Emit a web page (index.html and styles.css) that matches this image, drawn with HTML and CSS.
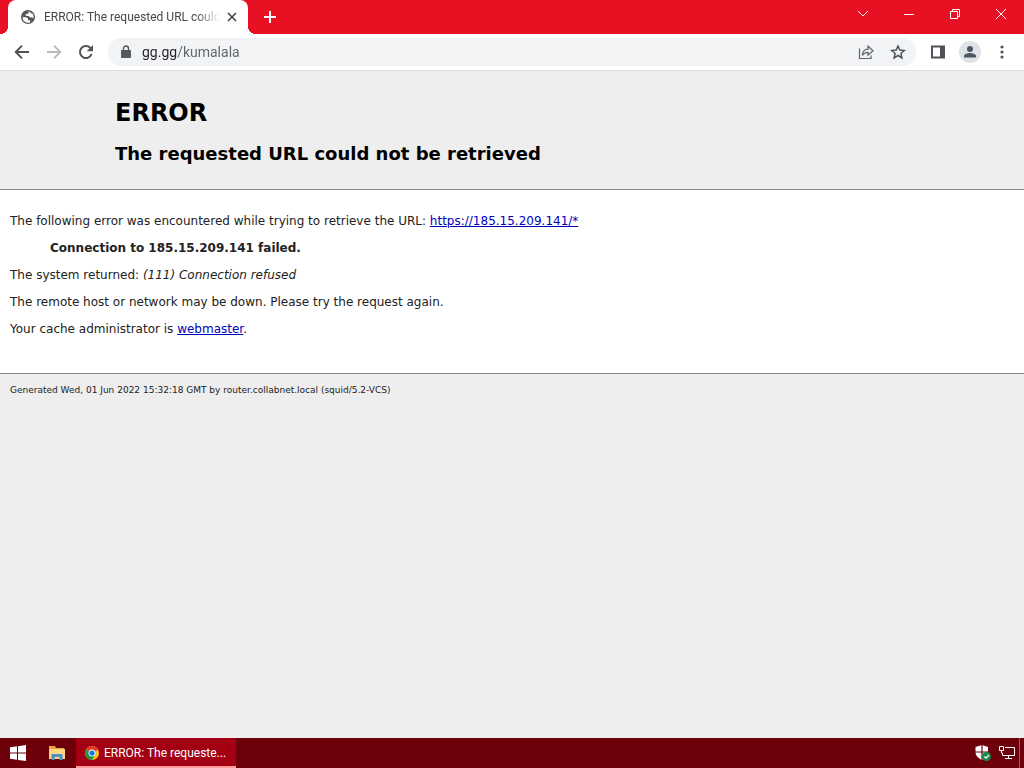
FILE: index.html
```html
<!DOCTYPE html>
<html lang="en">
<head>
  <meta charset="UTF-8" />
  <meta name="viewport" content="width=device-width, initial-scale=1.0" />
  <title>ERROR: The requested URL could not be retrieved</title>
  <link rel="stylesheet" href="styles.css">
</head>
<body>
  <!-- Tab strip -->
  <header class="titlebar">
    <div class="tab">
      <svg class="tab-icon" viewBox="0 0 16 16" width="16" height="16">
        <circle cx="8" cy="8" r="7" fill="#55585c" />
        <path d="M2.400 8.200H6l2 1.300v1.800h2.300l-.3 2.200A5.800 5.800 0 0 1 2.400 8.200ZM7.800 2.300 9 3.600 7.300 5 5.500 5.200 5.700 6.700 8.600 6.900 10.200 8.500 12 8.200 13.700 9.200A5.800 5.800 0 0 0 12 3.900L10.800 4.700 10.300 2.900Z" fill="#fff" />
      </svg>
      <span class="tab-title">ERROR: The requested URL could</span>
      <button class="tab-close" aria-label="Close tab">
        <svg viewBox="0 0 16 16" width="16" height="16"><path d="M4 4l8 8M12 4l-8 8" stroke="#45484c" stroke-width="1.700" /></svg>
      </button>
    </div>
    <button class="new-tab" aria-label="New tab">
      <svg viewBox="0 0 16 16" width="16" height="16"><path d="M8 2v12M2 8h12" stroke="#fff" stroke-width="2" /></svg>
    </button>
    <div class="window-buttons">
      <button aria-label="Search tabs">
        <svg viewBox="0 0 12 12" width="12" height="12"><path d="M1 3l5 5 5-5" /></svg>
      </button>
      <button aria-label="Minimize">
        <svg viewBox="0 0 12 12" width="12" height="12"><path d="M1 6.500h10" /></svg>
      </button>
      <button aria-label="Restore">
        <svg viewBox="0 0 12 12" width="12" height="12"><path d="M1.500 3.500h7v7h-7zM3.500 3.500v-2h7v7h-2" /></svg>
      </button>
      <button aria-label="Close">
        <svg viewBox="0 0 12 12" width="12" height="12"><path d="M1 1l10 10M11 1L1 11" /></svg>
      </button>
    </div>
  </header>

  <!-- Toolbar -->
  <nav class="toolbar">
    <button aria-label="Back">
      <svg viewBox="0 0 16 16" width="16" height="16"><path d="M15 8H2M8 1.700L1.700 8 8 14.300" fill="none" stroke="#4f5256" stroke-width="1.900" /></svg>
    </button>
    <button aria-label="Forward" disabled>
      <svg viewBox="0 0 16 16" width="16" height="16"><path d="M1 8h13M8 1.700L14.300 8 8 14.300" fill="none" stroke="#b8babd" stroke-width="1.900" /></svg>
    </button>
    <button aria-label="Reload">
      <svg viewBox="0 0 16 16" width="16" height="16">
        <path d="M13.600 10A6 6 0 1 1 12.200 3.800L13.500 5" fill="none" stroke="#4f5256" stroke-width="2" />
        <path d="M15 1v6.300H8.700Z" fill="#4f5256" />
      </svg>
    </button>
    <div class="omnibox">
      <svg class="lock" viewBox="0 0 12 14" width="12" height="14">
        <rect x="1" y="5" width="10" height="8" rx="1" fill="#55585c" />
        <path d="M3.500 5.500V3.500a2.500 2.500 0 0 1 5 0v2" fill="none" stroke="#55585c" stroke-width="1.400" />
      </svg>
      <input class="address" type="text" aria-label="Address" value="gg.gg/kumalala" />
      <button aria-label="Share this page">
        <svg viewBox="0 0 16 16" width="16" height="16">
          <path d="M1.500 4.500v10h11.500v-3M4.500 11.500c0-4 2-6.300 5.500-6.300V2.200l5 4.600-5 4.400V8.300c-2.600 0-4.300.9-5.500 3.200Z" fill="none" stroke="#5f6368" stroke-width="1.200" />
        </svg>
      </button>
      <button aria-label="Bookmark this tab">
        <svg viewBox="0 0 16 16" width="16" height="16">
          <path d="M8 2l1.800 4.100 4.500.4-3.400 3 1 4.400L8 11.500l-3.900 2.400 1-4.400-3.400-3 4.500-.4Z" fill="none" stroke="#4f5256" stroke-width="1.500" />
        </svg>
      </button>
    </div>
    <button aria-label="Side panel">
      <svg viewBox="0 0 16 16" width="16" height="16">
        <path d="M2 2.500h12v11H2z" fill="none" stroke="#4f5256" stroke-width="2" />
        <path d="M10 2h4.500v12H10z" fill="#4f5256" />
      </svg>
    </button>
    <button aria-label="Profile">
      <svg viewBox="0 0 22 22" width="22" height="22">
        <circle cx="11" cy="11" r="11" fill="#dee1e6" />
        <circle cx="11" cy="8" r="3" fill="#4b5563" />
        <path d="M5 16.500v-1.500c0-2 4-3 6-3s6 1 6 3v1.500Z" fill="#4b5563" />
      </svg>
    </button>
    <button aria-label="Menu">
      <svg viewBox="0 0 16 16" width="16" height="16" fill="#4f5256">
        <circle cx="8" cy="3" r="1.600" /><circle cx="8" cy="8" r="1.600" /><circle cx="8" cy="13" r="1.600" />
      </svg>
    </button>
  </nav>

  <!-- Error page -->
  <main class="page">
    <div class="titles">
      <h1>ERROR</h1>
      <h2>The requested URL could not be retrieved</h2>
    </div>
    <div class="content">
      <p>The following error was encountered while trying to retrieve the URL: <a href="https://185.15.209.141/*">https://185.15.209.141/*</a></p>
      <blockquote>Connection to 185.15.209.141 failed.</blockquote>
      <p>The system returned: <i>(111) Connection refused</i></p>
      <p>The remote host or network may be down. Please try the request again.</p>
      <p>Your cache administrator is <a href="mailto:webmaster">webmaster</a>.</p>
    </div>
    <div class="footer">
      <p>Generated Wed, 01 Jun 2022 15:32:18 GMT by router.collabnet.local (squid/5.2-VCS)</p>
    </div>
  </main>

  <!-- Taskbar -->
  <footer class="taskbar">
    <button class="start" aria-label="Start">
      <svg viewBox="0 0 16 16" width="16" height="16"><path d="M0 2.300l7-1v6.300H0zM8 1.200L16 0v7.600H8zM0 8.500h7v6.300l-7-1zM8 8.500h8V16l-8-1.100z" fill="#fff" /></svg>
    </button>
    <button class="pinned" aria-label="File Explorer">
      <svg viewBox="0 0 16 14" width="16" height="14">
        <path d="M0 0h6l1 2h8v10H0z" fill="#e9a93a" />
        <path d="M0 3h16v10H0z" fill="#fcd77f" />
        <path d="M2.500 14V8h11v6h-3v-3h-5v3z" fill="#4a90c8" />
      </svg>
    </button>
    <button class="task">
      <svg viewBox="0 0 16 16" width="14" height="14">
        <circle cx="8" cy="8" r="8" fill="#fbc116" />
        <path d="M8 8L1.100 4A8 8 0 0 1 14.900 4Z" fill="#e33b2e" />
        <path d="M8 8L1.100 4A8 8 0 0 0 8 16l3.500-6Z" fill="#229342" />
        <path d="M8 4h6.900L8 8Z" fill="#e33b2e" />
        <circle cx="8" cy="8" r="4" fill="#fff" />
        <circle cx="8" cy="8" r="3" fill="#1a73e8" />
      </svg>
      <span>ERROR: The requeste...</span>
    </button>
    <div class="tray">
      <button aria-label="Windows Security">
        <svg viewBox="0 0 16 16" width="16" height="16">
          <path d="M7 0l6 2v5c0 4-3 6.500-6 8-3-1.500-6.500-4-6.500-8V2Z" fill="#fff" />
          <path d="M7 0v15M0 7h13" stroke="#6e000b" stroke-width="1.200" />
          <circle cx="11.500" cy="11.500" r="4.500" fill="#1c8a4c" />
          <path d="M9.300 11.500l1.700 1.700 2.900-3.200" fill="none" stroke="#fff" stroke-width="1.200" />
        </svg>
      </button>
      <button aria-label="Network">
        <svg viewBox="0 0 16 16" width="16" height="16" fill="none" stroke="#fff">
          <path d="M6 2.500h9.500v8h-12V8M9.500 10.500v3M6 13.500h7" />
          <path d="M.5 1.500h4v4h-4zM2.500 5.500v2.500h1" />
        </svg>
      </button>
      <button class="show-desktop" aria-label="Show desktop"></button>
    </div>
  </footer>
</body>
</html>
```
FILE: styles.css
```css
/* Global Reset & Base Styles */
* {
  margin: 0;
  padding: 0;
  box-sizing: border-box;
}
body {
  display: flex;
  flex-direction: column;
  height: 100vh;
  font-family: Roboto, 'Open Sans', sans-serif;
  font-size: 12px;
  overflow: hidden;
}
button {
  display: flex;
  align-items: center;
  justify-content: center;
  flex-shrink: 0;
  border: none;
  background: none;
  font: inherit;
  color: inherit;
}
svg {
  flex-shrink: 0;
}
/* Tab strip */
.titlebar {
  display: flex;
  flex-shrink: 0;
  height: 34px;
  padding-left: 8px;
  background: #e81123;
}
.tab {
  position: relative;
  display: flex;
  align-items: center;
  width: 240px;
  padding: 0 8px 0 12px;
  background: #fff;
  border-radius: 8px 8px 0 0;
}
/* Curved feet of the active tab */
.tab::before,
.tab::after {
  content: '';
  position: absolute;
  bottom: 0;
  width: 8px;
  height: 8px;
}
.tab::before {
  left: -8px;
  background: radial-gradient(circle at 0 0, #e81123 8px, #fff 8px);
}
.tab::after {
  right: -8px;
  background: radial-gradient(circle at 100% 0, #e81123 8px, #fff 8px);
}
.tab-title {
  flex: 1;
  margin: 0 4px 0 8px;
  overflow: hidden;
  white-space: nowrap;
  color: #45484c;
  -webkit-mask-image: linear-gradient(to left, transparent, #000 24px);
  mask-image: linear-gradient(to left, transparent, #000 24px);
}
.tab-close {
  width: 16px;
}
.new-tab {
  width: 28px;
  margin-left: 8px;
}
.window-buttons {
  display: flex;
  height: 28px;
  margin-left: auto;
}
.window-buttons button {
  width: 46px;
}
.window-buttons svg {
  fill: none;
  stroke: #fff;
}
/* Toolbar */
.toolbar {
  display: flex;
  align-items: center;
  flex-shrink: 0;
  height: 37px;
  padding: 0 6px;
  background: #fff;
  border-bottom: 1px solid #dadce0;
}
.toolbar button {
  width: 32px;
  height: 28px;
}
.omnibox {
  display: flex;
  align-items: center;
  flex: 1;
  height: 28px;
  margin: 0 6px;
  padding: 0 2px 0 12px;
  border-radius: 14px;
  background: #f1f3f4;
}
.address {
  flex: 1;
  min-width: 0;
  margin-left: 10px;
  border: none;
  outline: none;
  font: 14px Roboto, 'Open Sans', sans-serif;
  /* host is darker than the path */
  color: transparent;
  background: linear-gradient(to right, #202124 35px, #5f6368 35px);
  -webkit-background-clip: text;
  background-clip: text;
}
/* Error page */
.page {
  flex: 1;
  overflow: hidden;
  background: #eee;
  font-family: Verdana, 'DejaVu Sans', sans-serif;
  color: #222;
}
.titles {
  padding: 25px 10px 23px 115px;
  border-bottom: 1px solid #888;
  color: #000;
}
.titles h1 {
  font-size: 24px;
  line-height: 34px;
}
.titles h2 {
  margin-top: 12px;
  font-size: 18px;
  line-height: 24px;
}
.content {
  padding: 23px 10px 25px;
  background: #fff;
  border-bottom: 1px solid #888;
}
.content p,
.content blockquote {
  margin-bottom: 11px;
  line-height: 16px;
}
.content blockquote {
  margin-left: 40px;
  font-weight: bold;
}
.content a {
  color: #0000bb;
}
.footer {
  padding: 9px 10px;
  font-size: 9px;
  line-height: 14px;
}
/* Taskbar */
.taskbar {
  display: flex;
  flex-shrink: 0;
  height: 30px;
  background: #6e000b;
  color: #fff;
}
.start {
  width: 36px;
}
.pinned {
  width: 40px;
  padding-left: 2px;
}
.task {
  justify-content: flex-start;
  width: 160px;
  padding: 2px 8px 0 9px;
  gap: 5px;
  background: #a30013;
  border-bottom: 2px solid #ff9a9a;
  white-space: nowrap;
}
.tray {
  display: flex;
  margin-left: auto;
}
.tray button {
  width: 24px;
}
.tray .show-desktop {
  width: 5px;
  border-left: 1px solid #a8555c;
}
```
